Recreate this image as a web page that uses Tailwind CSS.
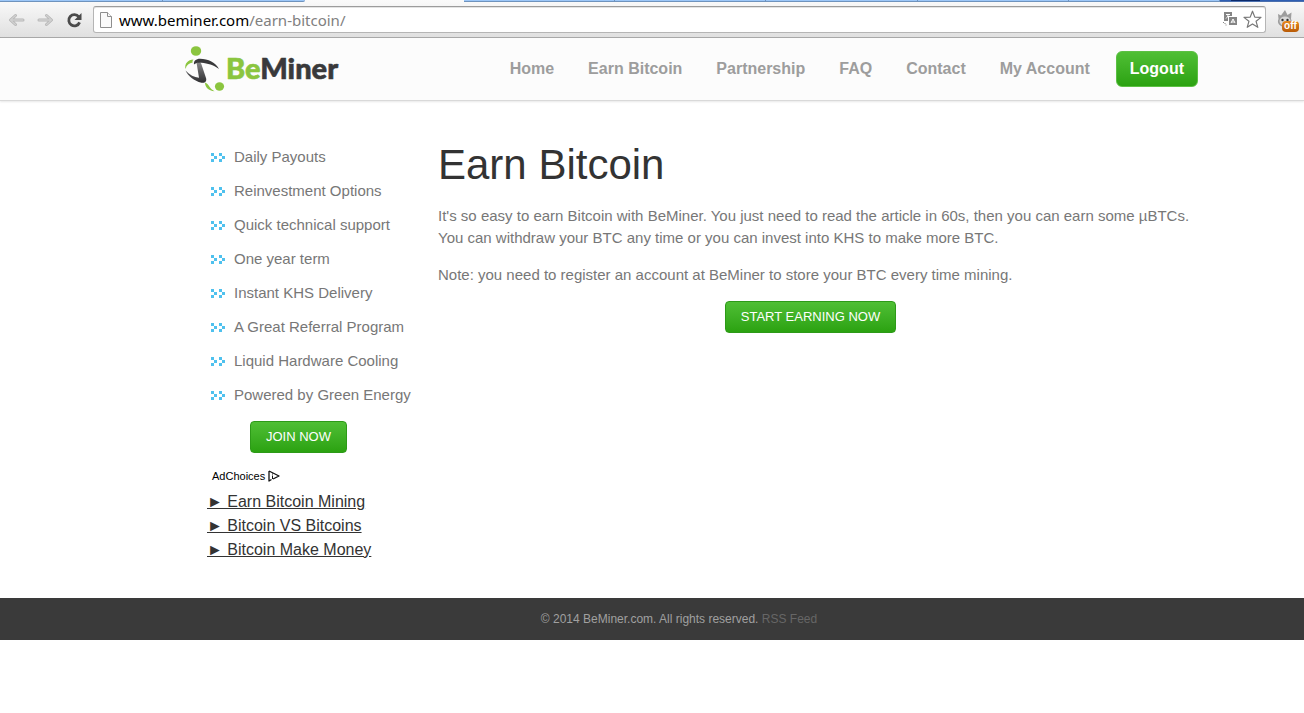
<!DOCTYPE html>
<html lang="en">
<head>
    <meta charset="UTF-8">
    <meta name="viewport" content="width=device-width, initial-scale=1.0">
    <title>BeMiner - Earn Bitcoin</title>
    <script src="https://cdn.jsdelivr.net/npm/@tailwindcss/browser@4"></script>
</head>
<body class="bg-white font-['Liberation_Sans',Arial,sans-serif] text-[15px] text-[#777]">
    <!-- Browser toolbar -->
    <div class="border-b border-[#a3a3a3] bg-linear-to-b from-[#fafafa] to-[#e0e0e0]">
        <!-- Tab strip -->
        <div class="flex h-[2px]">
            <div class="w-[163px] border-b border-r border-[#6f93bd] bg-[#9cc7f8]"></div>
            <div class="w-[142px] rounded-br border-b border-[#6f93bd] bg-[#9cc7f8]"></div>
            <div class="w-[159px]"></div>
            <div class="flex-1 border-b border-r border-[#6f93bd] bg-[#9cc7f8]"></div>
            <div class="flex-1 border-b border-r border-[#6f93bd] bg-[#9cc7f8]"></div>
            <div class="flex-1 border-b border-r border-[#6f93bd] bg-[#9cc7f8]"></div>
            <div class="flex-1 border-b border-r border-[#6f93bd] bg-[#9cc7f8]"></div>
            <div class="flex-1 border-b border-r border-[#6f93bd] bg-[#9cc7f8]"></div>
            <div class="w-[11px] border-b border-[#4a6fae] bg-[#2f5fb3]"></div>
            <div class="w-[29px] border-b border-[#4a6fae] bg-[#0c2a6b]"></div>
            <div class="w-[44px] border-b border-[#4a6fae] bg-[#2f5fb3]"></div>
        </div>
        <div class="flex h-[35px] items-center pl-2">
            <button type="button" aria-label="Back">
                <svg class="h-4 w-[17px]" viewBox="0 0 17 16" fill="none" stroke-linecap="round" stroke-linejoin="round">
                    <path d="M15 8H3M7.500 3.500L2.500 8l5 4.500" stroke="#b5b5b5" stroke-width="3"/>
                    <path d="M15 8H3M7.500 3.500L2.500 8l5 4.500" stroke="#d0d0d0" stroke-width="1.400"/>
                </svg>
            </button>
            <button type="button" aria-label="Forward" class="ml-3">
                <svg class="h-4 w-[17px]" viewBox="0 0 17 16" fill="none" stroke-linecap="round" stroke-linejoin="round">
                    <path d="M2 8h12M9.500 3.500l5 4.500-5 4.500" stroke="#b5b5b5" stroke-width="3"/>
                    <path d="M2 8h12M9.500 3.500l5 4.500-5 4.500" stroke="#d0d0d0" stroke-width="1.400"/>
                </svg>
            </button>
            <button type="button" aria-label="Reload" class="ml-3">
                <svg class="h-4 w-4" viewBox="0 0 16 16" fill="none">
                    <path d="M12.800 4.800A5.600 5.600 0 1 0 13.600 10.400" stroke="#4b4b4b" stroke-width="2.800"/>
                    <path d="M15.500 1v7H8.500z" fill="#4b4b4b"/>
                </svg>
            </button>
            <div class="ml-[11px] flex h-[27px] flex-1 items-center rounded-[3px] border border-[#b5b5b5] border-t-[#9c9c9c] bg-white px-[6px] shadow-[inset_0_1px_0_#e4e4e4]">
                <svg class="h-4 w-3 shrink-0" viewBox="0 0 12 16" fill="#fafafa" stroke="#8e8e8e">
                    <path d="M.500.500h7l4 4v11H.500z"/>
                    <path d="M7.500.500v4h4"/>
                </svg>
                <div class="flex-1 pl-[7px] font-['Noto_Sans',sans-serif] text-[15px] leading-5 text-[#808080]"><span class="text-black">www.beminer.com</span>/earn-bitcoin/</div>
                <!-- Translate -->
                <button type="button" aria-label="Translate">
                    <svg class="h-[15px] w-[15px]" viewBox="0 0 15 15">
                        <path d="M1 0h8v4H5v5H1z" fill="#858585"/>
                        <path d="M3 2.500h4M5 2.500c0 2-1 3-2 4" stroke="#fff" fill="none"/>
                        <path d="M6 5h8v8H6z" fill="#858585"/>
                        <path d="M8 11l2-4 2 4M8.500 10h3" stroke="#fff" fill="none"/>
                        <path d="M.500 10v1M1.500 11.500h1M3 12.500v1" stroke="#858585" fill="none"/>
                    </svg>
                </button>
                <button type="button" aria-label="Bookmark this page" class="ml-[5px] -mr-[3px]">
                    <svg class="h-[19px] w-[19px]" viewBox="0 0 19 19" fill="#fff" stroke="#777" stroke-width="1.200" stroke-linejoin="round">
                        <path d="M9.500 1.200l2.300 5.900 6.200.300-4.900 3.900 1.700 6-5.300-3.400-5.300 3.400 1.700-6L1 7.400l6.200-.300z"/>
                    </svg>
                </button>
            </div>
            <button type="button" aria-label="Extension, off" class="relative ml-[11px] mr-[5px] h-6 w-[22px]">
                <svg class="h-5 w-4" viewBox="0 0 16 20">
                    <path d="M1 4l3 1.500L8 0l2.500 5L14.500 2.500 14 9c2 4-1 8-6 8S-.500 13 1.500 9z" fill="#9d9d9d"/>
                    <ellipse cx="8" cy="11" rx="5.500" ry="4.500" fill="#d8d8d8"/>
                    <circle cx="5.500" cy="10" r="1.200" fill="#333"/>
                    <circle cx="10.500" cy="10" r="1.200" fill="#333"/>
                </svg>
                <span class="absolute right-0 bottom-0 h-[11px] w-[17px] rounded-sm bg-linear-to-b from-[#e88a1e] to-[#b85a06] text-center text-[10px] leading-[10px] font-bold text-white">off</span>
            </button>
        </div>
    </div>

    <!-- Site header -->
    <header class="border-b border-[#d9d9d9] bg-[#fcfcfc] pl-[54px] shadow-[0_1px_2px_#e8e8e8]">
        <div class="mx-auto flex h-[62px] max-w-[1008px] items-center justify-between pl-[9px]">
            <a href="#" aria-label="BeMiner">
                <svg class="h-[50px] w-[156px]" viewBox="0 0 156 50">
                    <defs>
                        <linearGradient id="torso" x1="0" y1="0" x2="0" y2="1">
                            <stop offset="0" stop-color="#8a8a8c"/>
                            <stop offset=".5" stop-color="#59595b"/>
                            <stop offset="1" stop-color="#2e2e30"/>
                        </linearGradient>
                    </defs>
                    <ellipse cx="12" cy="7" rx="5.200" ry="4.800" fill="#8bc53f"/>
                    <ellipse cx="35.500" cy="42.500" rx="4.600" ry="4.200" fill="#8bc53f"/>
                    <path d="M1.600 25C0 20 4 15.500 9.500 15.500c-1 1-1.200 2-.800 3C5 19 2.500 21 1.600 25z" fill="#8bc53f"/>
                    <path d="M12.500 18.500c2.500-1.300 4.500-.300 5 2l4.500 13.500c1 3.200-1 5.500-4.500 4.700C10 37 4 32 1.500 26.500c4.500 4.500 8.500 6.800 13.500 7.300z" fill="url(#torso)"/>
                    <path d="M10 20.500c-.500-3.500 2-5.700 6-5.700 8 0 16 4 19 10.200-6-4.200-11-5.500-17.500-6.200-3.500-.300-5.500-.300-7.500 1.700z" fill="#39393b"/>
                    <path d="M21 38.500c2 1 3.500 2.500 4.500 4.200 1 1.800 3 3.200 5 4.600-6-.800-9.500-3.800-9.500-8.800z" fill="#8bc53f"/>
                    <text x="42" y="35" font-family="Lato, sans-serif" font-weight="900" font-size="29" fill="#8bc53f" stroke="#8bc53f" stroke-width=".6">Be<tspan fill="#39393b" stroke="#39393b">Miner</tspan></text>
                </svg>
            </a>
            <nav class="-mr-[15px] flex items-center gap-[34px] text-[16px] font-bold text-[#9d9d9d]">
                <a href="#">Home</a>
                <a href="#">Earn Bitcoin</a>
                <a href="#">Partnership</a>
                <a href="#">FAQ</a>
                <a href="#">Contact</a>
                <a href="#">My Account</a>
                <a href="#" class="-ml-2 rounded-md border border-[#5cc044] bg-linear-to-b from-[#4fbf34] to-[#2ba210] px-[13px] py-[5px] text-white">Logout</a>
            </nav>
        </div>
    </header>

    <!-- Page content -->
    <div class="pl-[54px]">
        <div class="mx-auto flex max-w-[1008px] pt-[45px] pb-9">
            <aside class="w-[263px] shrink-0 pl-8">
                <ul class="pl-1">
                    <li class="flex h-[34px] items-start gap-[9px] leading-[22px]"><svg class="mt-[7px] h-[9px] w-[14px] shrink-0" viewBox="0 0 14 9" fill="#4fc1ee"><path id="arrows" d="M0 0h3v3h3v3H3v3H0V6h3V3H0zM8 0h3v3h3v3h-3v3H8V6h3V3H8z"/></svg>Daily Payouts</li>
                    <li class="flex h-[34px] items-start gap-[9px] leading-[22px]"><svg class="mt-[7px] h-[9px] w-[14px] shrink-0" viewBox="0 0 14 9" fill="#4fc1ee"><use href="#arrows"/></svg>Reinvestment Options</li>
                    <li class="flex h-[34px] items-start gap-[9px] leading-[22px]"><svg class="mt-[7px] h-[9px] w-[14px] shrink-0" viewBox="0 0 14 9" fill="#4fc1ee"><use href="#arrows"/></svg>Quick technical support</li>
                    <li class="flex h-[34px] items-start gap-[9px] leading-[22px]"><svg class="mt-[7px] h-[9px] w-[14px] shrink-0" viewBox="0 0 14 9" fill="#4fc1ee"><use href="#arrows"/></svg>One year term</li>
                    <li class="flex h-[34px] items-start gap-[9px] leading-[22px]"><svg class="mt-[7px] h-[9px] w-[14px] shrink-0" viewBox="0 0 14 9" fill="#4fc1ee"><use href="#arrows"/></svg>Instant KHS Delivery</li>
                    <li class="flex h-[34px] items-start gap-[9px] leading-[22px]"><svg class="mt-[7px] h-[9px] w-[14px] shrink-0" viewBox="0 0 14 9" fill="#4fc1ee"><use href="#arrows"/></svg>A Great Referral Program</li>
                    <li class="flex h-[34px] items-start gap-[9px] leading-[22px]"><svg class="mt-[7px] h-[9px] w-[14px] shrink-0" viewBox="0 0 14 9" fill="#4fc1ee"><use href="#arrows"/></svg>Liquid Hardware Cooling</li>
                    <li class="flex h-[34px] items-start gap-[9px] leading-[22px]"><svg class="mt-[7px] h-[9px] w-[14px] shrink-0" viewBox="0 0 14 9" fill="#4fc1ee"><use href="#arrows"/></svg>Powered by Green Energy</li>
                </ul>
                <button type="button" class="mt-[3px] ml-[43px] block h-8 rounded border border-[#2d9a18] bg-linear-to-b from-[#4fbf34] to-[#2ba210] px-[15px] text-[13px] text-white">JOIN NOW</button>
                <a href="#" class="mt-4 ml-[5px] flex items-center gap-[3px] text-[11px] leading-[14px] text-black">
                    AdChoices
                    <svg class="h-3 w-3" viewBox="0 0 12 12" fill="none" stroke="#111" stroke-linejoin="round">
                        <path d="M1 1l10 5-6 3M1 1v10l2.500-1.500" stroke-width="1.300"/>
                        <path d="M4.500 3.500v1M4.500 5.500V9"/>
                    </svg>
                </a>
                <ul class="mt-[7px] text-[16px] leading-6 text-[#333]">
                    <li><a href="#" class="underline">► Earn Bitcoin Mining</a></li>
                    <li><a href="#" class="underline">► Bitcoin VS Bitcoins</a></li>
                    <li><a href="#" class="underline">► Bitcoin Make Money</a></li>
                </ul>
            </aside>
            <main class="min-w-0 flex-1 leading-[22px]">
                <h1 class="text-[42px] leading-[38px] text-[#333]">Earn Bitcoin</h1>
                <p class="mt-[21px] lg:whitespace-nowrap">It's so easy to earn Bitcoin with BeMiner. You just need to read the article in 60s, then you can earn some µBTCs.<br>You can withdraw your BTC any time or you can invest into KHS to make more BTC.</p>
                <p class="mt-[15px]">Note: you need to register an account at BeMiner to store your BTC every time mining.</p>
                <button type="button" class="mx-auto mt-[15px] block h-8 rounded border border-[#2d9a18] bg-linear-to-b from-[#4fbf34] to-[#2ba210] px-[15px] text-[13px] text-white">START EARNING NOW</button>
            </main>
        </div>
    </div>

    <footer class="bg-[#3a3a3a] py-3 pl-[54px] text-center text-[12px] leading-[18px] text-[#a0a0a0]">
        © 2014 BeMiner.com. All rights reserved. <a href="#" class="text-[#666]">RSS Feed</a>
    </footer>
</body>
</html>
